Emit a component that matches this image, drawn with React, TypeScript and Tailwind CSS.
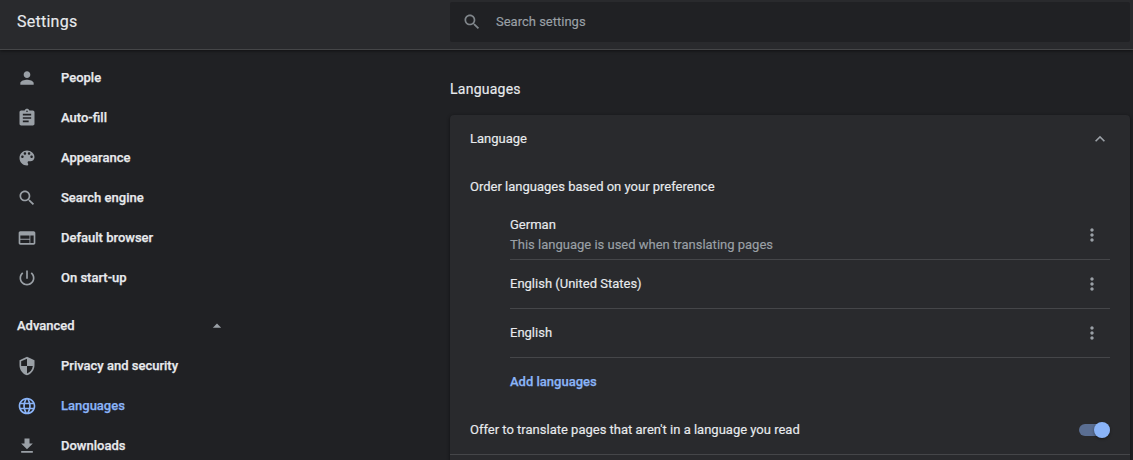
import type { ReactNode } from "react";

const icons = {
  person: "M12 12c2.21 0 4-1.79 4-4s-1.79-4-4-4-4 1.79-4 4 1.79 4 4 4zm0 2c-2.67 0-8 1.34-8 4v2h16v-2c0-2.66-5.33-4-8-4z",
  assignment:
    "M19 3h-4.18C14.4 1.84 13.3 1 12 1c-1.3 0-2.4.84-2.82 2H5c-1.1 0-2 .9-2 2v14c0 1.1.9 2 2 2h14c1.1 0 2-.9 2-2V5c0-1.1-.9-2-2-2zm-7 0c.55 0 1 .45 1 1s-.45 1-1 1-1-.45-1-1 .45-1 1-1zm2 14H7v-2h7v2zm3-4H7v-2h10v2zm0-4H7V7h10v2z",
  palette:
    "M12 3c-4.97 0-9 4.03-9 9s4.03 9 9 9c.83 0 1.5-.67 1.5-1.5 0-.39-.15-.74-.39-1.01-.23-.26-.38-.61-.38-.99 0-.83.67-1.5 1.5-1.5H16c2.76 0 5-2.24 5-5 0-4.42-4.03-8-9-8zm-5.500 9c-.83 0-1.5-.67-1.5-1.5S5.670 9 6.500 9 8 9.670 8 10.500 7.330 12 6.500 12zm3-4C8.670 8 8 7.330 8 6.500S8.670 5 9.500 5s1.500.67 1.500 1.500S10.330 8 9.500 8zm5 0c-.83 0-1.500-.67-1.500-1.500S13.670 5 14.500 5s1.500.67 1.500 1.500S15.330 8 14.500 8zm3 4c-.83 0-1.500-.67-1.500-1.500S16.670 9 17.500 9s1.500.67 1.500 1.500-.67 1.500-1.500 1.500z",
  search:
    "M15.5 14h-.79l-.28-.27C15.41 12.59 16 11.110 16 9.500 16 5.910 13.090 3 9.500 3S3 5.910 3 9.500 5.910 16 9.500 16c1.610 0 3.090-.59 4.230-1.570l.27.28v.79l5 4.990L20.490 19l-4.990-5zm-6 0C7.010 14 5 11.990 5 9.500S7.010 5 9.500 5 14 7.010 14 9.500 11.990 14 9.500 14z",
  web: "M20 4H4c-1.100 0-1.990.9-1.990 2L2 18c0 1.100.9 2 2 2h16c1.100 0 2-.9 2-2V6c0-1.100-.9-2-2-2zm-5 14H4v-4h11v4zm0-5H4V9h11v4zm5 5h-4V9h4v9z",
  power:
    "M13 3h-2v10h2V3zm4.830 2.170l-1.420 1.420C17.990 7.860 19 9.810 19 12c0 3.870-3.130 7-7 7s-7-3.130-7-7c0-2.190 1.010-4.140 2.580-5.420L6.170 5.170C4.230 6.820 3 9.260 3 12c0 4.970 4.030 9 9 9s9-4.030 9-9c0-2.740-1.230-5.180-3.170-6.830z",
  shield:
    "M12 1L3 5v6c0 5.550 3.840 10.740 9 12 5.160-1.260 9-6.450 9-12V5l-9-4zm0 10.990h7c-.53 4.120-3.280 7.790-7 8.940V12H5V6.300l7-3.110v8.800z",
  language:
    "M11.990 2C6.470 2 2 6.480 2 12s4.470 10 9.990 10C17.520 22 22 17.520 22 12S17.520 2 11.990 2zm6.930 6h-2.950c-.32-1.250-.78-2.450-1.380-3.560 1.840.63 3.370 1.910 4.330 3.560zM12 4.040c.83 1.200 1.480 2.530 1.910 3.960h-3.820c.43-1.430 1.080-2.760 1.910-3.960zM4.260 14C4.100 13.360 4 12.690 4 12s.1-1.360.26-2h3.380c-.08.66-.14 1.320-.14 2s.06 1.340.14 2H4.260zm.82 2h2.950c.32 1.250.78 2.450 1.380 3.560-1.840-.63-3.370-1.900-4.330-3.560zm2.950-8H5.080c.96-1.660 2.490-2.930 4.330-3.560C8.810 5.550 8.350 6.750 8.030 8zM12 19.960c-.83-1.200-1.480-2.530-1.910-3.960h3.820c-.43 1.430-1.080 2.760-1.910 3.960zM14.340 14H9.660c-.09-.66-.16-1.320-.16-2s.07-1.350.16-2h4.680c.09.65.16 1.320.16 2s-.07 1.340-.16 2zm.25 5.560c.6-1.110 1.060-2.310 1.380-3.560h2.950c-.96 1.650-2.490 2.930-4.330 3.560zM16.360 14c.08-.66.14-1.320.14-2s-.06-1.340-.14-2h3.380c.16.64.26 1.310.26 2s-.1 1.360-.26 2h-3.380z",
  download: "M19 9h-4V3H9v6H5l7 7 7-7zM5 18v2h14v-2H5z",
  dropUp: "M7 14l5-5 5 5z",
  chevronUp: "M12 8l-6 6 1.410 1.410L12 10.830l4.590 4.580L18 14z",
  more: "M12 8c1.100 0 2-.9 2-2s-.9-2-2-2-2 .9-2 2 .9 2 2 2zm0 2c-1.100 0-2 .9-2 2s.9 2 2 2 2-.9 2-2-.9-2-2-2zm0 6c-1.100 0-2 .9-2 2s.9 2 2 2 2-.9 2-2-.9-2-2-2z",
};

type IconName = keyof typeof icons;

function Icon({ name, className = "" }: { name: IconName; className?: string }) {
  return (
    <svg viewBox="0 0 24 24" fill="currentColor" aria-hidden="true" className={`size-5 shrink-0 ${className}`}>
      <path d={icons[name]} />
    </svg>
  );
}

function NavItem({ icon, label, active = false }: { icon: IconName; label: string; active?: boolean }) {
  return (
    <a className={`flex h-10 items-center gap-6 pl-[17px] font-medium [-webkit-text-stroke:0.25px] ${active ? "text-[#8ab4f8]" : "text-[#e8eaed]"}`}>
      <Icon name={icon} className={active ? "" : "text-[#9aa0a6]"} />
      <span>{label}</span>
    </a>
  );
}

function LanguageRow({ children }: { children: ReactNode }) {
  return (
    <li className="flex h-[49px] items-center justify-between border-b border-[#454649] pr-2">
      <div>{children}</div>
      <Icon name="more" className="text-[#9aa0a6]" />
    </li>
  );
}

export default function App() {
  return (
    <div className="flex h-[460px] w-[1133px] flex-col overflow-hidden bg-[#202124] font-['Roboto',sans-serif] text-[13px] leading-5 text-[#e8eaed] [-webkit-text-stroke:0.15px]">
      <header className="z-10 flex h-[50px] shrink-0 border-b border-[#454648] bg-[#292a2d] shadow-[0_1px_3px_rgba(0,0,0,0.5)]">
        <h1 className="w-[450px] pt-2.5 pl-[17px] text-base leading-6 tracking-[0.25px]">Settings</h1>
        <div className="mt-0.5 flex h-10 w-[680px] items-center rounded-xs bg-[#202124] pl-3 text-[#9aa0a6]">
          <Icon name="search" className="text-[#80868b]" />
          <span className="pl-3.5">Search settings</span>
        </div>
      </header>
      <div className="flex min-h-0 flex-1">
        <nav className="w-[450px] shrink-0 pt-2">
          <NavItem icon="person" label="People" />
          <NavItem icon="assignment" label="Auto-fill" />
          <NavItem icon="palette" label="Appearance" />
          <NavItem icon="search" label="Search engine" />
          <NavItem icon="web" label="Default browser" />
          <NavItem icon="power" label="On start-up" />
          <div className="mt-2 flex h-10 w-[227px] items-center justify-between pl-[17px] font-medium [-webkit-text-stroke:0.25px]">
            <span>Advanced</span>
            <Icon name="dropUp" className="text-[#9aa0a6]" />
          </div>
          <NavItem icon="shield" label="Privacy and security" />
          <NavItem icon="language" label="Languages" active />
          <NavItem icon="download" label="Downloads" />
        </nav>
        <main className="w-[680px]">
          <h2 className="pt-[29px] pb-4 text-sm tracking-[0.25px]">Languages</h2>
          <section className="h-[400px] rounded bg-[#292a2d] shadow-[0_1px_3px_1px_rgba(0,0,0,0.3)]">
            <div className="flex h-12 items-center justify-between px-5">
              <span>Language</span>
              <Icon name="chevronUp" className="text-[#9aa0a6]" />
            </div>
            <div className="flex h-12 items-center px-5">Order languages based on your preference</div>
            <ul className="pr-5 pl-[60px]">
              <LanguageRow>
                <div>German</div>
                <div className="text-[#9aa0a6]">This language is used when translating pages</div>
              </LanguageRow>
              <LanguageRow>English (United States)</LanguageRow>
              <LanguageRow>English</LanguageRow>
            </ul>
            <div className="flex h-12 items-center pl-[60px] font-medium text-[#8ab4f8] [-webkit-text-stroke:0.25px]">Add languages</div>
            <div className="flex h-[49px] items-center justify-between border-b border-[#454649] px-5">
              <span>Offer to translate pages that aren't in a language you read</span>
              <span className="flex h-3 w-[31px] items-center justify-end rounded-full bg-[#5a6e92]">
                <span className="size-4 rounded-full bg-[#8ab4f8] shadow-[0_1px_3px_rgba(0,0,0,0.4)]" />
              </span>
            </div>
          </section>
        </main>
      </div>
    </div>
  );
}
